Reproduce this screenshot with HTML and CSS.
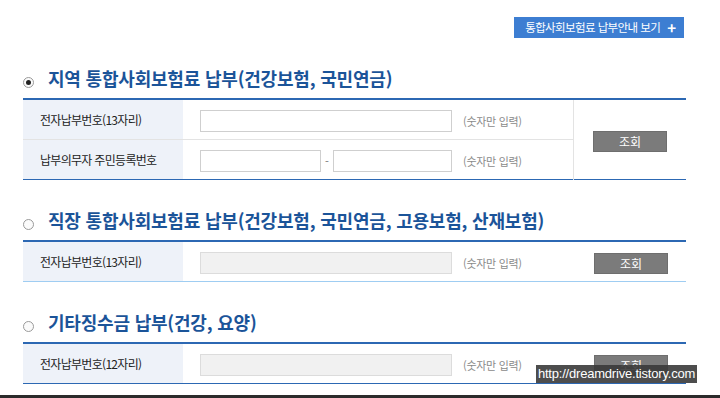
FILE: index.html
```html
<!DOCTYPE html>
<html lang="ko">
<head>
  <meta charset="UTF-8">
  <title>통합사회보험료 납부</title>
  <link rel="stylesheet" href="styles.css">
</head>
<body>

  <div class="page">
    <div class="top-bar">
      <a class="guide-btn" href="#">통합사회보험료 납부안내 보기 <span class="plus">+</span></a>
    </div>

    <div class="pay-sec">
      <h3 class="sec-title"><span class="radio on"></span>지역 통합사회보험료 납부(건강보험, 국민연금)</h3>
      <table class="pay-table">
        <tr>
          <th>전자납부번호(13자리)</th>
          <td class="field"><input type="text" class="inp inp-long"><span class="hint">(숫자만 입력)</span></td>
          <td class="act divided" rowspan="2"><button class="btn-search">조회</button></td>
        </tr>
        <tr>
          <th>납부의무자 주민등록번호</th>
          <td class="field"><input type="text" class="inp inp-short"><span class="dash">-</span><input type="text" class="inp inp-short2"><span class="hint">(숫자만 입력)</span></td>
        </tr>
      </table>
    </div>

    <div class="pay-sec">
      <h3 class="sec-title"><span class="radio"></span>직장 통합사회보험료 납부(건강보험, 국민연금, 고용보험, 산재보험)</h3>
      <table class="pay-table light-bottom">
        <tr>
          <th>전자납부번호(13자리)</th>
          <td class="field"><input type="text" class="inp inp-long" disabled><span class="hint">(숫자만 입력)</span></td>
          <td class="act"><button class="btn-search">조회</button></td>
        </tr>
      </table>
    </div>

    <div class="pay-sec">
      <h3 class="sec-title"><span class="radio"></span>기타징수금 납부(건강, 요양)</h3>
      <table class="pay-table">
        <tr>
          <th>전자납부번호(12자리)</th>
          <td class="field"><input type="text" class="inp inp-long" disabled><span class="hint">(숫자만 입력)</span></td>
          <td class="act"><button class="btn-search">조회</button></td>
        </tr>
      </table>
    </div>
  </div>

  <div class="watermark">http://dreamdrive.tistory.com</div>
  <div class="bottom-strip"></div>

</body>
</html>
```

FILE: styles.css
```css
html, body { margin: 0; padding: 0; background: #fff; overflow: hidden; }
body { font-family: "Noto Sans CJK KR", "Noto Sans", sans-serif; color: #333; width: 720px; height: 398px; }

.page { width: 663px; padding-left: 23px; }

.top-bar { display: flex; justify-content: flex-end; padding-top: 17px; padding-right: 2px; }
.guide-btn { display: flex; align-items: center; height: 21px; padding: 0 8px 0 11px; background: #3d7ed2; color: #fff; font-size: 11.5px; letter-spacing: -0.6px; text-decoration: none; line-height: 21px; }
.guide-btn .plus { font-size: 15px; font-weight: bold; margin-left: 7px; letter-spacing: 0; }

.sec-title { display: flex; align-items: center; margin: 28px 0 8px; height: 24px; line-height: 24px; font-size: 18px; font-weight: bold; color: #1b5499; letter-spacing: -0.2px; }
.radio { width: 11px; height: 11px; border: 1px solid #9a9a9a; border-radius: 50%; background: #fbfbfb; margin: 9px 14px 0 0; box-sizing: border-box; position: relative; flex: none; }
.radio.on::after { content: ""; position: absolute; left: 2px; top: 2px; width: 5px; height: 5px; border-radius: 50%; background: #222; }

.pay-table { width: 663px; border-collapse: collapse; border-top: 2px solid #2c68b3; border-bottom: 1px solid #2c68b3; }
.pay-table.light-bottom { border-bottom: 1px solid #9fcdf2; }
.pay-table tr + tr th, .pay-table tr + tr td { border-top: 1px solid #e3e3e3; }
.pay-table th { width: 143px; height: 39px; padding: 0 0 0 17px; background: #eef2f9; text-align: left; font-size: 12px; font-weight: normal; color: #222; letter-spacing: -0.7px; }
.pay-table td.field { width: 373px; padding: 0 0 0 17px; }
.pay-table td.act { padding: 0; text-align: center; }
.pay-table td.divided { border-left: 1px solid #e3e3e3; }

.field { white-space: nowrap; }
.inp { height: 22px; box-sizing: border-box; border: 1px solid #cfcfcf; background: #fff; vertical-align: middle; padding: 0 4px; margin: 0; }
.inp:disabled { background: #f1f1f1; border-color: #dcdcdc; }
.inp-long { width: 252px; }
.inp-short { width: 121px; }
.inp-short2 { width: 119px; }
.dash { display: inline-block; width: 12px; text-align: center; font-size: 11px; color: #777; vertical-align: middle; }
.hint { margin-left: 11px; font-size: 11px; color: #8a8a8a; letter-spacing: -0.3px; vertical-align: middle; }

.btn-search { width: 74px; height: 21px; border: 1px solid #6e6e6e; background: #7b7b7b; color: #fff; font-family: "Noto Sans CJK KR", sans-serif; font-size: 12px; padding: 0; cursor: pointer; }
.pay-table td.act .btn-search { margin-left: 3px; }
.pay-table td.divided .btn-search { margin-left: 0; }

.watermark { position: absolute; left: 536px; top: 365px; width: 161px; height: 18px; line-height: 18px; background: rgba(58, 58, 58, 0.9); color: #fff; font-family: "Liberation Sans", Arial, sans-serif; font-size: 13px; letter-spacing: -0.2px; text-align: center; }
.bottom-strip { position: fixed; left: 0; bottom: 0; width: 720px; height: 3px; background: #2b2b2b; }
```
